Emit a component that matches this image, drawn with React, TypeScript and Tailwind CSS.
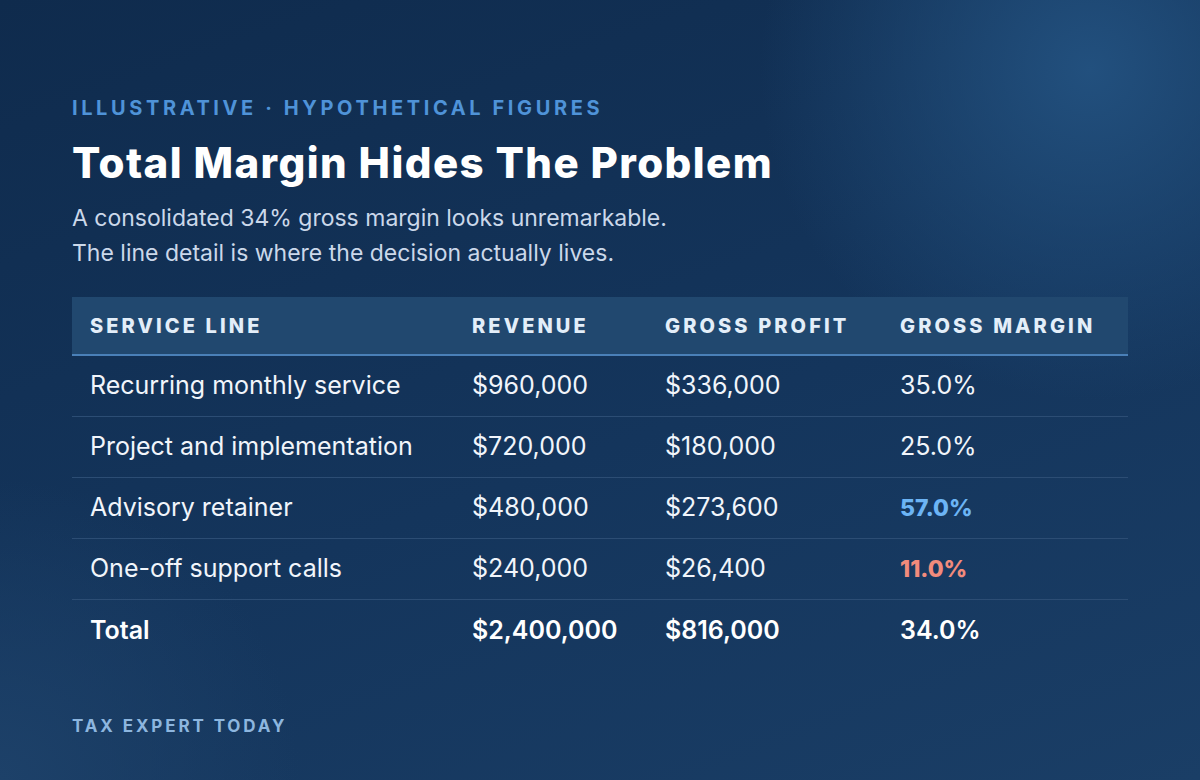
const rows = [
  { line: 'Recurring monthly service', revenue: '$960,000', profit: '$336,000', margin: '35.0%', tone: 'plain' },
  { line: 'Project and implementation', revenue: '$720,000', profit: '$180,000', margin: '25.0%', tone: 'plain' },
  { line: 'Advisory retainer', revenue: '$480,000', profit: '$273,600', margin: '57.0%', tone: 'good' },
  { line: 'One-off support calls', revenue: '$240,000', profit: '$26,400', margin: '11.0%', tone: 'bad' },
]

const display = { fontFamily: 'Inter, "Noto Sans", sans-serif' }
const body = { fontFamily: 'Inter, "Liberation Sans", sans-serif' }

const cols = 'grid grid-cols-[382px_193px_235px_1fr]'

export default function App() {
  return (
    <div
      className="relative h-[780px] w-[1200px] overflow-hidden bg-[#143358]"
      style={{
        background:
          'radial-gradient(circle at 1090px 70px, #22507e 0px, rgba(34,80,126,0) 330px), radial-gradient(circle at 0px 780px, #1d4169 0px, rgba(29,65,105,0) 300px), linear-gradient(160deg, #0f2b4d 0%, #14355c 55%, #1a3e66 100%)',
      }}
    >
      <div className="flex h-full flex-col px-[72px] pt-[96px]" style={body}>
        <p className="text-[20px] font-bold uppercase leading-[24px] tracking-[0.18em] text-[#4f93d8]" style={display}>
          Illustrative · Hypothetical Figures
        </p>
        <h1 className="mt-[19px] text-[42px] font-extrabold leading-[48px] tracking-[0.033em] text-white" style={display}>
          Total Margin Hides The Problem
        </h1>
        <p className="mt-[14px] text-[23px] leading-[35px] text-[#cbd8ea]">
          A consolidated 34% gross margin looks unremarkable.
          <br />
          The line detail is where the decision actually lives.
        </p>

        <div className="mt-[26px] w-[1056px]">
          <div className={`${cols} h-[59px] items-center border-b-2 border-[#4a80b8] bg-[#21486f]`}>
            {['Service Line', 'Revenue', 'Gross Profit', 'Gross Margin'].map((h) => (
              <div
                key={h}
                className="px-[18px] text-[20px] font-extrabold uppercase tracking-[0.155em] text-[#e3eef9]"
                style={display}
              >
                {h}
              </div>
            ))}
          </div>
          {rows.map((r) => (
            <div key={r.line} className={`${cols} h-[61px] items-center border-b border-[#2c4d74] text-[25px] text-[#f1f5fb]`}>
              <div className="px-[18px]">{r.line}</div>
              <div className="px-[18px]">{r.revenue}</div>
              <div className="px-[18px]">{r.profit}</div>
              <div
                className={
                  r.tone === 'good'
                    ? 'px-[18px] text-[23px] font-extrabold text-[#6cb4f5]'
                    : r.tone === 'bad'
                      ? 'px-[18px] text-[23px] font-extrabold text-[#f28b7c]'
                      : 'px-[18px]'
                }
                style={r.tone === 'plain' ? undefined : display}
              >
                {r.margin}
              </div>
            </div>
          ))}
          <div className={`${cols} h-[61px] items-center text-[25px] font-semibold text-white`}>
            <div className="px-[18px]">Total</div>
            <div className="px-[18px]">$2,400,000</div>
            <div className="px-[18px]">$816,000</div>
            <div className="px-[18px]">34.0%</div>
          </div>
        </div>

        <p className="mt-[52px] text-[17px] font-bold uppercase leading-[26px] tracking-[0.17em] text-[#8db6df]" style={display}>
          Tax Expert Today
        </p>
      </div>
    </div>
  )
}
